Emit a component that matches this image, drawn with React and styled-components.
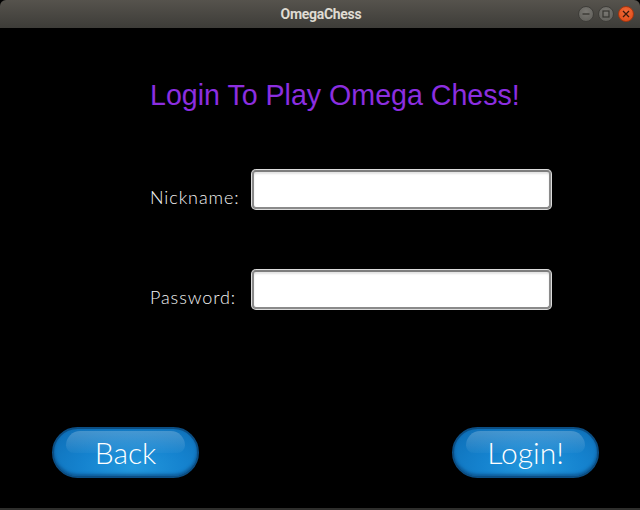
import styled, { createGlobalStyle } from 'styled-components';

const GlobalStyle = createGlobalStyle`
    html, body {
        margin: 0;
        padding: 0;
        background: #000;
    }
    * {
        box-sizing: border-box;
    }
`

export default function App() {
    return (
        <>
            <GlobalStyle />
            <Window>
                <TitleBar>
                    <WindowTitle>OmegaChess</WindowTitle>
                    <Controls>
                        <Control>
                            <svg width="8" height="8" viewBox="0 0 8 8">
                                <path d="M0.5 4h7" stroke="#35342f" strokeWidth="1.3" />
                            </svg>
                        </Control>
                        <Control>
                            <svg width="8" height="8" viewBox="0 0 8 8">
                                <rect x="1" y="1" width="6" height="6" fill="none" stroke="#35342f" strokeWidth="1.2" />
                            </svg>
                        </Control>
                        <Control close>
                            <svg width="8" height="8" viewBox="0 0 8 8">
                                <path d="M1 1l6 6M7 1l-6 6" stroke="#3b1a0c" strokeWidth="1.3" />
                            </svg>
                        </Control>
                    </Controls>
                </TitleBar>
                <Content>
                    <Heading>Login To Play Omega Chess!</Heading>
                    <Form>
                        <Label>Nickname:</Label>
                        <Field type="text" />
                        <Label>Password:</Label>
                        <Field type="password" />
                    </Form>
                    <Footer>
                        <PillButton>Back</PillButton>
                        <PillButton>Login!</PillButton>
                    </Footer>
                </Content>
            </Window>
        </>
    )
}

const Window = styled.div`
    width: 640px;
    height: 510px;
    display: flex;
    flex-direction: column;
    background: #000;
    border-bottom: 2px solid #2e2e2c;
`
const TitleBar = styled.div`
    height: 28px;
    flex-shrink: 0;
    display: flex;
    align-items: center;
    justify-content: center;
    position: relative;
    border-radius: 6px 6px 0 0;
    background: linear-gradient(#56534d, #3d3c38);
`
const WindowTitle = styled.div`
    font-family: Roboto, "Liberation Sans", sans-serif;
    font-weight: 700;
    font-size: 14px;
    letter-spacing: -0.3px;
    color: #dfdbd2;
    margin-left: 2px;
`
const Controls = styled.div`
    position: absolute;
    right: 6px;
    top: 6px;
    display: flex;
    gap: 4px;
`
const Control = styled.div`
    width: 16px;
    height: 16px;
    border-radius: 50%;
    display: flex;
    align-items: center;
    justify-content: center;
    background: ${props => props.close
        ? 'radial-gradient(circle at 50% 35%, #f26b3a, #dd4814)'
        : 'radial-gradient(circle at 50% 35%, #7a7873, #5c5b56)'};
    border: 1px solid ${props => props.close ? '#a6360f' : '#3e3d39'};
`
const Content = styled.div`
    flex: 1;
    display: flex;
    flex-direction: column;
    padding: 47px 41px 30px 52px;
`
const Heading = styled.h1`
    margin: 0 0 0 98px;
    height: 40px;
    font-family: "Liberation Sans", Arial, sans-serif;
    font-weight: 400;
    font-size: 28.6px;
    line-height: 40px;
    color: #8c2ee0;
    white-space: nowrap;
`
const Form = styled.div`
    margin: 55px 0 0 98px;
    display: grid;
    grid-template-columns: 102px 299px;
    grid-auto-rows: 39px;
    row-gap: 61px;
`
const Label = styled.label`
    align-self: end;
    padding-bottom: 1px;
    font-family: Lato, "Open Sans", sans-serif;
    font-weight: 300;
    font-size: 18px;
    letter-spacing: 0.9px;
    color: #f4f4f4;
`
const Field = styled.input`
    width: 299px;
    height: 39px;
    border: 2px solid #8a8a8a;
    border-top-color: #7e7e7e;
    border-radius: 4px;
    box-shadow: 0 0 0 1px #dcdcdc, inset 0 2px 2px #e4e4e4;
    background: #fff;
    outline: none;
`
const Footer = styled.div`
    margin-top: auto;
    display: flex;
    justify-content: space-between;
`
const PillButton = styled.button`
    position: relative;
    width: 147px;
    height: 51px;
    border-radius: 26px;
    border: 2px solid #0b4e84;
    background: radial-gradient(ellipse at 55% 80%, #2398dd 0%, #1583cf 45%, #0d6cb4 100%);
    box-shadow: inset 0 -2px 3px rgba(6, 52, 100, 0.5);
    color: #fff;
    font-family: Lato, "Open Sans", sans-serif;
    font-weight: 300;
    font-size: 30px;
    padding: 0 0 2px;
    overflow: hidden;
    &::before {
        content: "";
        position: absolute;
        left: 12px;
        right: 12px;
        top: 2px;
        height: 22px;
        border-radius: 22px 22px 12px 12px;
        background: linear-gradient(rgba(255, 255, 255, 0.22), rgba(255, 255, 255, 0.03));
    }
`
